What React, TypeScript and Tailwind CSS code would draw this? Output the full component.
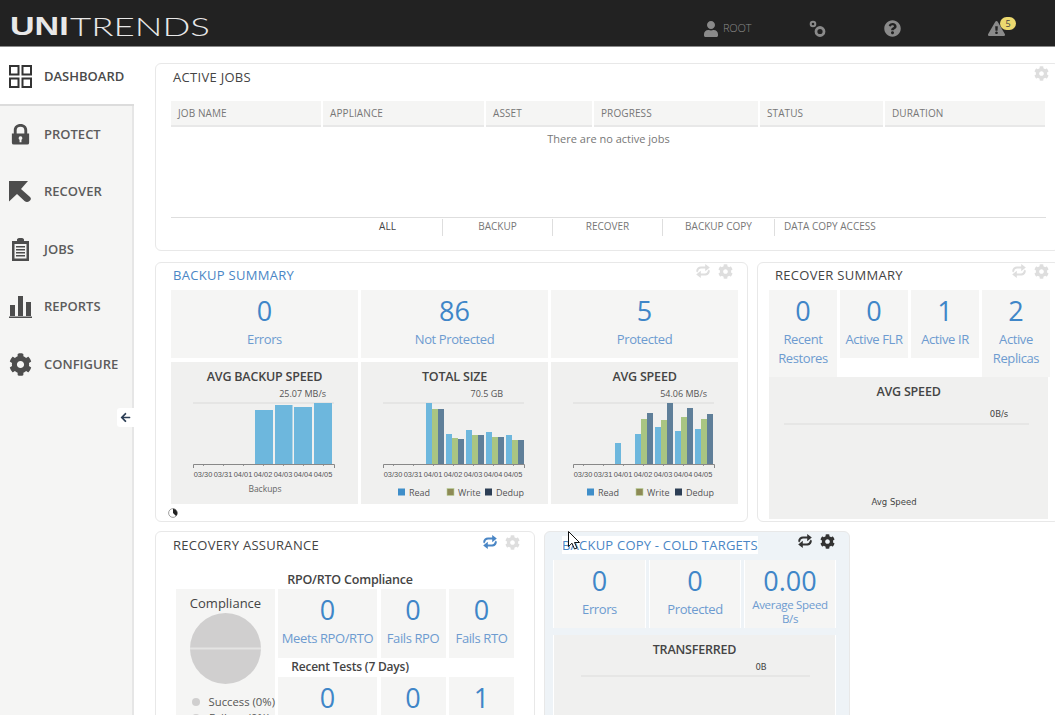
import React from "react";
import { FaCog, FaQuestionCircle, FaUser, FaExclamationTriangle, FaArrowLeft } from "react-icons/fa";

const sans = "font-['Open_Sans','Liberation_Sans',sans-serif]";

function Refresh({ className }: { className: string }) {
  return (
    <svg viewBox="0 0 16 16" className={className} fill="currentColor">
      <path d="M1.2 8.2C1.2 5 3.4 3.4 6 3.4h4.2V1l4.6 3.6-4.6 3.6V5.6H6.2c-1.6 0-2.8 1-2.8 2.2L2.2 9.4z" />
      <path d="M14.8 7.8c0 3.2-2.2 4.8-4.8 4.8H5.8V15L1.2 11.4 5.8 7.8v2.6h4c1.6 0 2.8-1 2.8-2.2l1.2-1.6z" />
    </svg>
  );
}

function Panel({
  title, titleClass, pr, gear, refresh, iconsClass, className, children,
}: {
  title: string; titleClass: string; pr: string; gear: string; refresh?: string; iconsClass: string; className: string; children: React.ReactNode;
}) {
  return (
    <div className={`border border-[#e8e8e8] rounded-[6px] shrink-0 ${className}`}>
      <div className={`flex justify-between items-start h-[27px] pt-[3px] pl-[17px] ${pr}`}>
        <div className={`text-[13px] leading-[18px] font-medium ${titleClass}`}>{title}</div>
        <div className={`flex items-center gap-[7px] ${iconsClass}`}>
          {refresh && <Refresh className={`w-[16px] h-[16px] ${refresh}`} />}
          <FaCog className={`w-[15px] h-[15px] ${gear}`} />
        </div>
      </div>
      {children}
    </div>
  );
}

function Tile({ value, label, className, labelClass }: { value: string; label: React.ReactNode; className: string; labelClass?: string }) {
  return (
    <div className={`flex flex-col items-center text-center bg-[#f5f5f4] pt-[4px] ${className}`}>
      <div className="text-[27px] leading-[34px] text-[#3f86c8]">{value}</div>
      <div className={labelClass ?? "text-[13px] leading-[18.5px] mt-[2px] text-[#6d9bd0] tracking-[-0.4px]"}>{label}</div>
    </div>
  );
}

const days = ["03/30", "03/31", "04/01", "04/02", "04/03", "04/04", "04/05"];
const READ = "#6db7dd";
const WRITE = "#a9c582";
const DEDUP = "#5f7f99";

type Bar = { x: number; top: number; w: number; fill: string };

function group(startX: number, step: number, tops: number[][]): Bar[] {
  const out: Bar[] = [];
  tops.forEach((t, i) => {
    const x = startX + i * step;
    [READ, WRITE, DEDUP].forEach((fill, j) => {
      if (t[j] !== undefined && t[j] > 0) out.push({ x: x + j * 6, top: t[j] - 362, w: 6, fill });
    });
  });
  return out;
}

const chartTitle = "h-[24px] shrink-0 text-center text-[12.5px] font-semibold leading-[29px] text-[#444] tracking-[-0.2px]";

function Chart({
  title, max, maxEnd, bars, footer, legendX,
}: {
  title: string; max: string; maxEnd: number; bars: Bar[]; footer?: string; legendX?: number[];
}) {
  return (
    <div className="bg-[#f0f0ef] h-[142px] flex flex-col">
      <div className={chartTitle}>{title}</div>
      <svg viewBox="0 24 187 118" className="w-full h-[118px]">
        <text x={maxEnd} y="35" textAnchor="end" fontSize="9" fill="#555" fontFamily="Open Sans">{max}</text>
        <rect x="22" y="40" width="141" height="2" fill="#e5e5e4" />
        {bars.map((b, i) => (
          <rect key={i} x={b.x} y={b.top} width={b.w} height={102 - b.top} fill={b.fill} />
        ))}
        <path d="M22.5 106V102.5H163.5V106" fill="none" stroke="#888" strokeWidth="1" />
        {days.map((d, i) => (
          <g key={d}>
            <rect x={32 + i * 20} y="103" width="1" height="1" fill="#999" />
            <text x={32 + i * 20} y="115" textAnchor="middle" fontSize="7.4" fill="#555" fontFamily="Liberation Sans">{d}</text>
          </g>
        ))}
        {footer && (
          <text x="94" y="130" textAnchor="middle" fontSize="8.5" fill="#666" fontFamily="Open Sans">{footer}</text>
        )}
        {legendX && (
          <g fontSize="9" fill="#555" fontFamily="Open Sans">
            <rect x={legendX[0]} y="126.5" width="7" height="7" fill="#3f8ec9" />
            <text x={legendX[0] + 11} y="133.500">Read</text>
            <rect x={legendX[1]} y="126.5" width="7" height="7" fill="#8d8a55" stroke="#bcd39b" strokeWidth="0.6" />
            <text x={legendX[1] + 11} y="133.500">Write</text>
            <rect x={legendX[2]} y="126.5" width="7" height="7" fill="#2c3e55" />
            <text x={legendX[2] + 11} y="133.500">Dedup</text>
          </g>
        )}
      </svg>
    </div>
  );
}

function EmptyChart({
  title, label, labelX, lineX, lineW, lineY, labelY, width, footer, footerX, height,
}: {
  title: string; label: string; labelX: number; lineX: number; lineW: number; lineY: number; labelY: number; width: number; footer?: string; footerX?: number; height: number;
}) {
  return (
    <div className="bg-[#f0f0ef] flex flex-col" style={{ height }}>
      <div className={chartTitle}>{title}</div>
      <svg viewBox={`0 24 ${width} ${height - 24}`} style={{ width, height: height - 24 }}>
        <text x={labelX} y={labelY} textAnchor="middle" fontSize="8.5" fill="#444" fontFamily="DejaVu Sans">{label}</text>
        <rect x={lineX} y={lineY} width={lineW} height="2" fill="#e6e6e5" />
        {footer && (
          <text x={footerX} y="128" textAnchor="middle" fontSize="8.5" fill="#444" fontFamily="DejaVu Sans">{footer}</text>
        )}
      </svg>
    </div>
  );
}

const columns = [
  ["JOB NAME", "w-[150px]"],
  ["APPLIANCE", "w-[161px]"],
  ["ASSET", "w-[106px]"],
  ["PROGRESS", "w-[164px]"],
  ["STATUS", "w-[123px]"],
  ["DURATION", "w-[160px]"],
];

const nav: { label: string; icon: React.ReactNode }[] = [
  {
    label: "PROTECT",
    icon: (
      <svg viewBox="0 0 24 24" className="w-[23px] h-[23px]" fill="#4d4d4d">
        <path fillRule="evenodd" d="M3 11h2V7.5C5 3.5 8 1 12 1s7 2.5 7 6.5V11h2v9.5a2 2 0 0 1-2 2H5a2 2 0 0 1-2-2zM8 11h8V7.5C16 5.2 14.400 4 12 4S8 5.200 8 7.500zm4 2.800a2 2 0 0 0-1 3.700V20h2v-2.500a2 2 0 0 0-1-3.700z" />
      </svg>
    ),
  },
  {
    label: "RECOVER",
    icon: (
      <svg viewBox="0 0 23 23" className="w-[23px] h-[23px]" fill="#4d4d4d">
        <path d="M0 1H19L12 9L21 17Q23 19 20.500 21Q18 23 15.500 21L8 14L0 21.500Z" />
      </svg>
    ),
  },
  {
    label: "JOBS",
    icon: (
      <svg viewBox="0 0 23 23" className="w-[23px] h-[23px]">
        <path fill="#4d4d4d" d="M3 3h5V1.500C8 .7 9 0 11.500 0S15 .7 15 1.500V3h5v20H3z" />
        <path fill="#f5f5f4" d="M5.500 6h12v14.500h-12z" />
        <path fill="#4d4d4d" d="M7 8h9v1.500H7zM7 11h9v1.500H7zM7 14h9v1.500H7zM7 17h9v1.500H7z" />
      </svg>
    ),
  },
  {
    label: "REPORTS",
    icon: (
      <svg viewBox="0 0 23 23" className="w-[23px] h-[23px]" fill="#4d4d4d">
        <path d="M1 10h5v11H1zM9 1h5v20H9zM17 7h5v14h-5zM0 21.500h23V23H0z" />
      </svg>
    ),
  },
  { label: "CONFIGURE", icon: <FaCog className="w-[23px] h-[23px] text-[#4d4d4d]" /> },
];

export default function App() {
  return (
    <div className={`relative w-[1055px] h-[715px] overflow-hidden flex flex-col bg-white ${sans}`}>
      {/* top bar */}
      <header className="h-[47px] shrink-0 bg-[#222222] border-b border-[#8a8a8a] flex items-center justify-between pr-[50px]">
        <div className="pl-[10px] pt-[6px] w-[210px] h-[36px] flex items-center text-[#e8e8e8] whitespace-nowrap">
          <span className="inline-block w-[60px] origin-left scale-x-[1.31] font-['Liberation_Sans'] font-bold text-[26px] leading-[30px]">UNI</span>
          <span className="inline-block origin-left scale-x-[1.41] font-['Lato'] font-light text-[26px] leading-[30px]">TRENDS</span>
        </div>
        <div className="flex items-center text-[#8a8a8a] mt-[11px]">
          <FaUser className="w-[16px] h-[16px]" />
          <span className="ml-[4px] text-[11px] tracking-[-0.2px] font-light w-[31px]">ROOT</span>
          <svg viewBox="0 0 17 18" className="ml-[55px] w-[17px] h-[18px]" fill="none" stroke="currentColor">
            <circle cx="4" cy="4" r="2.300" strokeWidth="2" />
            <circle cx="11" cy="11.500" r="4" strokeWidth="2.800" />
          </svg>
          <FaQuestionCircle className="ml-[58px] w-[17px] h-[17px]" />
          <div className="relative ml-[87px] w-[17px] h-[17px]">
            <FaExclamationTriangle className="w-[17px] h-[17px]" />
            <div className="absolute left-[12px] top-[-3px] w-[16px] h-[13px] rounded-full bg-[#ecd96f] text-[#444] text-[9px] leading-[13px] text-center">5</div>
          </div>
        </div>
      </header>

      <div className="flex flex-1 min-h-0">
        {/* sidebar */}
        <aside className="relative w-[134px] shrink-0 bg-[#f5f5f4] border-r-2 border-[#e6e6e6] flex flex-col">
          <div className="h-[58.5px] pt-[3px] -mr-[2px] bg-white border-b-2 border-[#dcdcdc] flex items-center pl-[9px] gap-[12px]">
            <svg viewBox="0 0 23 23" className="w-[23px] h-[23px] shrink-0" fill="none" stroke="#333" strokeWidth="2">
              <rect x="1" y="1" width="8.500" height="8.500" />
              <rect x="13.500" y="1" width="8.500" height="8.500" />
              <rect x="1" y="13.500" width="8.500" height="8.500" />
              <rect x="13.500" y="13.500" width="8.500" height="8.500" />
            </svg>
            <span className="text-[13px] font-semibold text-[#4a4a4a]">DASHBOARD</span>
          </div>
          {nav.map((n) => (
            <div key={n.label} className="h-[57.5px] flex items-center pl-[9px] gap-[12px]">
              <span className="w-[23px] h-[23px] shrink-0">{n.icon}</span>
              <span className="text-[13px] font-semibold text-[#5c5c5c]">{n.label}</span>
            </div>
          ))}
          <div className="absolute left-[117px] top-[361px] w-[17px] h-[19px] bg-white rounded-l-[3px] flex items-center justify-center">
            <FaArrowLeft className="w-[11px] h-[11px] text-[#2c3e55]" />
          </div>
        </aside>

        {/* main */}
        <main className="flex-1 min-w-0 overflow-hidden pl-[21px] pt-[16px]">
          <div className="w-[905px] flex flex-col gap-[11px]">
            {/* active jobs */}
            <Panel
              title="ACTIVE JOBS"
              titleClass="text-[#444] mt-[1px] tracking-[0.3px]"
              pr="pr-[10px]"
              gear="text-[#dedede]"
              iconsClass="-mt-[1px]"
              className="h-[188px] bg-white"
            >
              <div className="pl-[15px] pt-[10px]">
                <div className="flex gap-[2px] w-[875px]">
                  {columns.map(([c, w]) => (
                    <div key={c} className={`${w} shrink-0 h-[26px] bg-[#f5f5f4] border-b-2 border-[#e8e8e8] pl-[7px] text-[10px] leading-[24px] text-[#777] tracking-[0.1px]`}>
                      {c}
                    </div>
                  ))}
                </div>
                <div className="w-[875px] h-[91px] border-b border-[#dedede] text-center text-[11px] leading-[24px] text-[#777]">
                  There are no active jobs
                </div>
                <div className="flex pl-[162px] text-[10px] text-[#777] pt-[1px]">
                  {["ALL", "BACKUP", "RECOVER", "BACKUP COPY"].map((t, i) => (
                    <div key={t} className={`${i === 3 ? "w-[112px]" : "w-[110px]"} h-[17px] text-center leading-[14px] border-r border-[#dedede] ${i === 0 ? "text-[#444]" : ""}`}>
                      {t}
                    </div>
                  ))}
                  <div className="pl-[9px] leading-[14px]">DATA COPY ACCESS</div>
                </div>
              </div>
            </Panel>

            {/* second row */}
            <div className="flex gap-[9px]">
              <Panel
                title="BACKUP SUMMARY"
                titleClass="text-[#4a86c5] tracking-[0.3px]"
                pr="pr-[14px]"
                gear="text-[#dedede]"
                refresh="text-[#dedede]"
                iconsClass="-mt-[3px]"
                className="w-[593px] h-[260px] bg-white"
              >
                <div className="pl-[15px]">
                  <div className="grid grid-cols-[187px_187px_187px] gap-x-[3px] gap-y-[4px] w-[567px]">
                    <Tile value="0" label="Errors" className="h-[68px]" />
                    <Tile value="86" label="Not Protected" className="h-[68px]" />
                    <Tile value="5" label="Protected" className="h-[68px]" />
                    <Chart
                      title="AVG BACKUP SPEED"
                      max="25.07 MB/s"
                      maxEnd={155}
                      footer="Backups"
                      bars={[
                        { x: 84, top: 48, w: 18, fill: READ },
                        { x: 104, top: 43, w: 17.500, fill: READ },
                        { x: 123, top: 45, w: 18, fill: READ },
                        { x: 143, top: 41, w: 18, fill: READ },
                      ]}
                    />
                    <Chart
                      title="TOTAL SIZE"
                      max="70.5 GB"
                      maxEnd={142}
                      legendX={[37, 86, 124]}
                      bars={group(65, 20, [
                        [403, 409, 409],
                        [434, 438, 439],
                        [430, 435, 435],
                        [432, 437, 437],
                        [435, 440, 440],
                      ])}
                    />
                    <Chart
                      title="AVG SPEED"
                      max="54.06 MB/s"
                      maxEnd={156}
                      legendX={[36, 85, 124]}
                      bars={group(64, 20, [
                        [443, 0, 0],
                        [434, 419, 413],
                        [427, 420, 403],
                        [431, 417, 408],
                        [429, 419, 414],
                      ])}
                    />
                  </div>
                  <svg viewBox="0 0 10 10" className="w-[10px] h-[10px] mt-[4px] -ml-[3px]">
                    <circle cx="5" cy="5" r="4.400" fill="#fff" stroke="#888" strokeWidth="0.800" />
                    <path d="M5 .8A4.200 4.200 0 0 1 8 8L5 5z" fill="#222" />
                  </svg>
                </div>
              </Panel>

              <Panel
                title="RECOVER SUMMARY"
                titleClass="text-[#444] tracking-[0.3px]"
                pr="pr-[10px]"
                gear="text-[#dedede]"
                refresh="text-[#dedede]"
                iconsClass="-mt-[3px]"
                className="w-[303px] h-[260px] bg-white"
              >
                <div className="pl-[11px] w-[293px]">
                  <div className="flex gap-[3px] items-start">
                    <Tile value="0" label={<>Recent<br />Restores</>} className="w-[68px] h-[87px]" />
                    <Tile value="0" label="Active FLR" className="w-[68px] h-[68px]" />
                    <Tile value="1" label="Active IR" className="w-[68px] h-[68px]" />
                    <Tile value="2" label={<>Active<br />Replicas</>} className="w-[68px] h-[87px]" />
                  </div>
                  <div className="w-[279px]">
                    <EmptyChart
                      title="AVG SPEED"
                      label="0B/s"
                      labelX={230}
                      lineX={15}
                      lineW={245}
                      lineY={46}
                      labelY={40}
                      width={279}
                      height={142}
                      footer="Avg Speed"
                      footerX={125}
                    />
                  </div>
                </div>
              </Panel>
            </div>
          </div>

          {/* third row */}
          <div className="flex gap-[9px] mt-[9px]">
            <Panel
              title="RECOVERY ASSURANCE"
              titleClass="text-[#444] mt-[1px] tracking-[0.3px]"
              pr="pr-[14px]"
              gear="text-[#dedede]"
              refresh="text-[#4a86c5]"
              iconsClass="-mt-[1px]"
              className="w-[380px] h-[300px] bg-white"
            >
              <div className="pl-[20px] pr-[20px]">
                <div className="h-[30px] pt-[12px] pl-[10px] text-center text-[12.5px] leading-[18px] font-semibold text-[#444] tracking-[-0.2px]">RPO/RTO Compliance</div>
                <div className="flex gap-[3px] items-start">
                  <div className="w-[99px] h-[200px] shrink-0 bg-[#f5f5f4] flex flex-col items-center pt-[5px] text-[#444]">
                    <div className="text-[13px] leading-[18px]">Compliance</div>
                    <svg viewBox="0 0 71 71" className="w-[71px] h-[71px] mt-[1px] shrink-0">
                      <circle cx="35.500" cy="35.500" r="35.500" fill="#d0cfcf" />
                      <rect x="0" y="34.500" width="71" height="2" fill="#e4e4e3" />
                    </svg>
                    <div className="w-[99px] pl-[16px] text-[11.300px] leading-[16px] mt-[10px] text-[#555] whitespace-nowrap">
                      <div className="flex items-center gap-[9px]"><span className="w-[8px] h-[8px] rounded-full bg-[#d0cfcf]" />Success (0%)</div>
                      <div className="flex items-center gap-[9px]"><span className="w-[8px] h-[8px] rounded-full bg-[#d0cfcf]" />Failure (0%)</div>
                    </div>
                  </div>
                  <div className="flex flex-col">
                    <div className="flex gap-[3.500px]">
                      <Tile value="0" label="Meets RPO/RTO" className="w-[99px] h-[69px]" />
                      <Tile value="0" label="Fails RPO" className="w-[65px] h-[69px]" />
                      <Tile value="0" label="Fails RTO" className="w-[65px] h-[69px]" />
                    </div>
                    <div className="h-[19px] pr-[92px] text-center text-[12px] leading-[18px] font-semibold text-[#444] tracking-[-0.2px] whitespace-nowrap">Recent Tests (7 Days)</div>
                    <div className="flex gap-[3.500px]">
                      <Tile value="0" label="" className="w-[99px] h-[69px]" />
                      <Tile value="0" label="" className="w-[65px] h-[69px]" />
                      <Tile value="1" label="" className="w-[65px] h-[69px]" />
                    </div>
                  </div>
                </div>
              </div>
            </Panel>

            <Panel
              title="BACKUP COPY - COLD TARGETS"
              titleClass="text-[#4a86c5] bg-white mt-[1px] tracking-[0.22px]"
              pr="pr-[14px]"
              gear="text-[#333]"
              refresh="text-[#333]"
              iconsClass="-mt-[2px]"
              className="w-[306px] h-[300px] bg-[#eef3f7] border-[#dfe5ea]"
            >
              <div className="pl-[8px] pt-[1px]">
                <div className="flex gap-[3px] w-[283px]">
                  <Tile value="0" label="Errors" className="w-[93px] h-[68px] border-x border-white" />
                  <Tile value="0" label="Protected" className="w-[92px] h-[68px] border-x border-white" />
                  <Tile
                    value="0.00"
                    label={<>Average Speed<br />B/s</>}
                    labelClass="text-[11.500px] leading-[14px] text-[#6d9bd0] tracking-[-0.3px]"
                    className="w-[92px] h-[68px] border-x border-white"
                  />
                </div>
                <div className="w-[283px] mt-[7px] border-x border-white">
                  <EmptyChart
                    title="TRANSFERRED"
                    label="0B"
                    labelX={207}
                    lineX={27}
                    lineW={229}
                    lineY={40}
                    labelY={35}
                    width={281}
                    height={142}
                  />
                </div>
              </div>
            </Panel>
          </div>
        </main>
      </div>

      {/* mouse cursor captured in the screenshot */}
      <svg viewBox="0 0 13 19" className="absolute left-[568px] top-[531px] w-[13px] h-[19px]">
        <path d="M.5.5V15.500L4 12.200L6.500 18L9 17L6.500 11.500H11.500Z" fill="#fff" stroke="#111" strokeWidth="1" />
      </svg>
    </div>
  );
}
